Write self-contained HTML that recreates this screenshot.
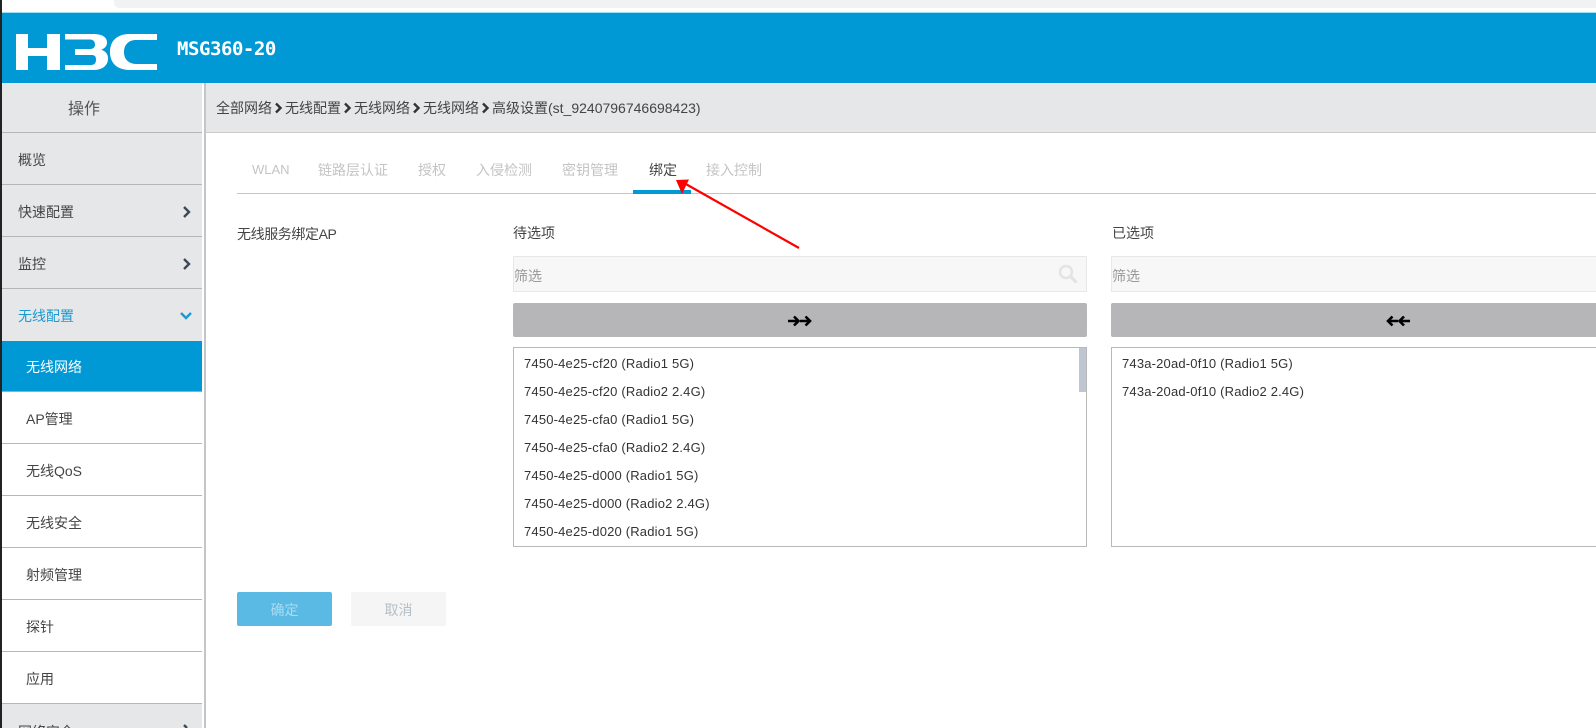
<!DOCTYPE html>
<html lang="zh"><head><meta charset="utf-8"><title>H3C MSG360-20</title>
<style>
*{box-sizing:border-box}
html,body{margin:0;padding:0}
body{width:1596px;height:728px;overflow:hidden;position:relative;background:#fff;font-family:"Liberation Sans","WenQuanYi Zen Hei","Noto Sans CJK SC",sans-serif;font-size:14px;color:#444;}
.a{position:absolute;white-space:nowrap}
.row{position:absolute;left:2px;width:200px;border-bottom:1px solid #b5b6b8;line-height:54px;padding-left:16px;color:#444;overflow:hidden}
.g{background:#e6e7e8}
.s{padding-left:24px;background:#fff}
.tab{position:absolute;top:160px;line-height:20px;color:#c4c4c4;white-space:nowrap}
.item{position:absolute;left:0;white-space:nowrap;font-size:13px;letter-spacing:.18px;line-height:20px;color:#333}
.filter{position:absolute;top:256px;height:36px;background:#f7f7f7;border:1px solid #e8e8e8;line-height:38px;color:#999;font-size:14px}
.mv{position:absolute;top:303px;height:34px;background:#b6b6b8;border-radius:2px}
.list{position:absolute;top:347px;height:200px;border:1px solid #b8b8b8;background:#fff}
.btn{position:absolute;top:592px;width:95px;height:34px;line-height:37px;text-align:center;border-radius:2px}
.sep{display:inline-block;width:13px;height:14px;vertical-align:-2px}
</style></head><body>
<div class="a" style="left:0;top:0;width:1596px;height:8px;background:#fff"></div>
<div class="a" style="left:114px;top:0;width:1482px;height:8px;background:#f1f2f2;border-bottom-left-radius:6px"></div>
<div class="a" style="left:0;top:0;width:2px;height:728px;background:#222"></div>
<div class="a" style="left:2px;top:12px;width:1594px;height:71px;background:#0098d5;border-top:1px solid #9fe0f2"></div>
<svg class="a" style="left:2px;top:12px" width="200" height="71" viewBox="2 12 200 71"><g fill="#fff">
<path d="M16 34h12v14h19V34h13v36H47V56H28v14H16z"/>
<path fill-rule="evenodd" d="M65 34h28c9 0 14 3 14 8.500 0 3.500-2 5.800-6 7.300 4.500 1.300 7 4 7 8.700C108 66 102 70 93 70H65v-5h26c3.500 0 5-2 5-5.500S94.500 55 91 55H75v-6h15c3 0 5-1.500 5-4.500S93 39.500 90 39.500H65z"/>
<path d="M157 34h-27c-13 0-20 7-20 18s7 18 20 18h27v-6h-21c-7 0-12-4.500-12-12s5-12 12-12h21z"/>
</g></svg>
<div class="a" style="left:177px;top:36px;font:bold 19px/26px 'DejaVu Sans Mono','Liberation Mono',monospace;letter-spacing:-.45px;color:#fff">MSG360-20</div>

<div class="a g" style="left:2px;top:83px;width:200px;height:50px;line-height:54px;padding-left:66px;font-size:16px;color:#555;border-bottom:1px solid #b5b6b8">操作</div>
<div class="row g" style="top:133px;height:52px">概览</div>
<div class="row g" style="top:185px;height:52px">快速配置</div>
<div class="row g" style="top:237px;height:52px">监控</div>
<div class="row g" style="top:289px;height:52px;border:0;color:#1b9ad2">无线配置</div>
<div class="row" style="top:341px;height:51px;background:#0098d5;color:#fff;padding-left:24px;border-bottom:1px solid #6bbce0;line-height:52px">无线网络</div>
<div class="row s" style="top:392px;height:52px">AP管理</div>
<div class="row s" style="top:444px;height:52px">无线QoS</div>
<div class="row s" style="top:496px;height:52px">无线安全</div>
<div class="row s" style="top:548px;height:52px">射频管理</div>
<div class="row s" style="top:600px;height:52px">探针</div>
<div class="row s" style="top:652px;height:52px">应用</div>
<div class="row g" style="top:704px;height:24px;border:0;line-height:56px">网络安全</div>
<svg class="a" style="left:180px;top:200px" width="16" height="130" viewBox="0 0 16 130" fill="none" stroke-width="2.400">
<path d="M2 2l5 5-5 5" stroke="#3d4a55" transform="translate(2 5)"/>
<path d="M2 2l5 5-5 5" stroke="#3d4a55" transform="translate(2 57)"/>
<path d="M1 6l5 5 5-5" stroke="#1b9ad2" transform="translate(0 107)"/>
</svg>
<svg class="a" style="left:180px;top:724px" width="16" height="4" fill="none" stroke="#3d4a55" stroke-width="2.400"><path d="M4 1l3 3"/></svg>
<div class="a" style="left:202px;top:83px;width:2px;height:645px;background:#fff"></div>
<div class="a" style="left:204px;top:83px;width:2px;height:645px;background:#c4c5c6"></div>

<div class="a" style="left:206px;top:83px;width:1390px;height:50px;background:#e6e7e8;border-bottom:1px solid #ccc;line-height:51px;padding-left:10px;font-size:14px;color:#444">全部网络<svg class="sep" viewBox="0 0 13 14"><path d="M4 2.500l4.500 4.500L4 11.500" fill="none" stroke="#333" stroke-width="2.400"/></svg>无线配置<svg class="sep" viewBox="0 0 13 14"><path d="M4 2.500l4.500 4.500L4 11.500" fill="none" stroke="#333" stroke-width="2.400"/></svg>无线网络<svg class="sep" viewBox="0 0 13 14"><path d="M4 2.500l4.500 4.500L4 11.500" fill="none" stroke="#333" stroke-width="2.400"/></svg>无线网络<svg class="sep" viewBox="0 0 13 14"><path d="M4 2.500l4.500 4.500L4 11.500" fill="none" stroke="#333" stroke-width="2.400"/></svg>高级设置(st_9240796746698423)</div>

<div class="tab" style="left:252px;font-size:13px">WLAN</div>
<div class="tab" style="left:318px">链路层认证</div>
<div class="tab" style="left:418px">授权</div>
<div class="tab" style="left:476px">入侵检测</div>
<div class="tab" style="left:562px">密钥管理</div>
<div class="tab" style="left:649px;color:#444">绑定</div>
<div class="tab" style="left:706px">接入控制</div>
<div class="a" style="left:237px;top:193px;width:1359px;height:1px;background:#c6c6c6"></div>
<div class="a" style="left:633px;top:190px;width:58px;height:4px;background:#0098d5"></div>

<div class="a" style="left:237px;top:224px;line-height:20px;font-size:14px;letter-spacing:-.4px;color:#444">无线服务绑定AP</div>
<div class="a" style="left:513px;top:223px;line-height:20px;font-size:14px;color:#444">待选项</div>
<div class="a" style="left:1112px;top:223px;line-height:20px;font-size:14px;color:#444">已选项</div>

<div class="filter" style="left:513px;width:574px">筛选</div>
<svg class="a" style="left:1057px;top:263px" width="22" height="22" fill="none" stroke="#e3e3e3"><circle cx="9" cy="9" r="6" stroke-width="2.400"/><path d="M13.500 13.500l6 6" stroke-width="3.200"/></svg>
<div class="filter" style="left:1111px;width:495px">筛选</div>

<div class="mv" style="left:513px;width:574px"></div>
<div class="mv" style="left:1111px;width:495px"></div>
<svg class="a" style="left:787px;top:314px" width="26" height="14" fill="none" stroke="#000" stroke-width="2.600"><path d="M1 7h11M7 2.500l4.500 4.500L7 11.500"/><path d="M13 7h10M18.500 2.500L23 7l-4.500 4.500"/></svg>
<svg class="a" style="left:1385px;top:314px" width="26" height="14" fill="none" stroke="#000" stroke-width="2.600"><path d="M25 7H14M19 2.500L14.500 7l4.500 4.500"/><path d="M13 7H3M7.500 2.500L3 7l4.500 4.500"/></svg>

<div class="list" style="left:513px;width:574px">
<div class="a" style="left:565px;top:0;width:7px;height:44px;background:#bfc6d1"></div>
<div class="item" style="left:10px;top:6px">7450-4e25-cf20 (Radio1 5G)</div>
<div class="item" style="left:10px;top:34px">7450-4e25-cf20 (Radio2 2.4G)</div>
<div class="item" style="left:10px;top:62px">7450-4e25-cfa0 (Radio1 5G)</div>
<div class="item" style="left:10px;top:90px">7450-4e25-cfa0 (Radio2 2.4G)</div>
<div class="item" style="left:10px;top:118px">7450-4e25-d000 (Radio1 5G)</div>
<div class="item" style="left:10px;top:146px">7450-4e25-d000 (Radio2 2.4G)</div>
<div class="item" style="left:10px;top:174px">7450-4e25-d020 (Radio1 5G)</div>
</div>
<div class="list" style="left:1111px;width:490px">
<div class="item" style="left:10px;top:6px">743a-20ad-0f10 (Radio1 5G)</div>
<div class="item" style="left:10px;top:34px">743a-20ad-0f10 (Radio2 2.4G)</div>
</div>

<div class="btn" style="left:237px;background:#5bbae4;color:#a9dcf2">确定</div>
<div class="btn" style="left:351px;background:#f5f5f5;color:#b4bec6">取消</div>

<svg class="a" style="left:660px;top:170px" width="150" height="90" fill="#f00"><path d="M16 10l13-.5-7 14.500z"/><path d="M24 13L139 78" stroke="#f00" stroke-width="2.200" fill="none"/></svg>
</body></html>
